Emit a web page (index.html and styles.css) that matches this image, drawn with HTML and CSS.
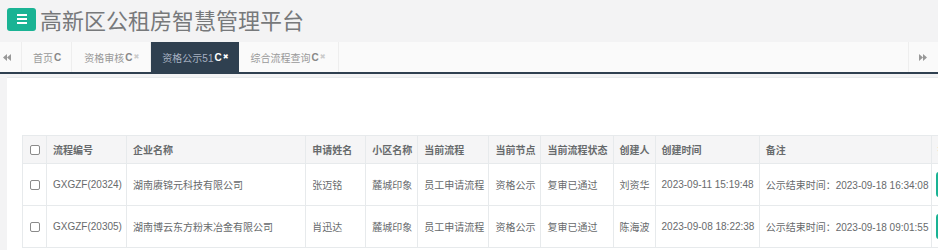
FILE: index.html
```html
<!DOCTYPE html>
<html lang="zh-CN">
<head>
<meta charset="utf-8">
<title>高新区公租房智慧管理平台</title>
<link rel="stylesheet" href="styles.css">
</head>
<body>
<header class="top">
  <button class="menu-btn" type="button" aria-label="menu">
    <span class="bar"></span><span class="bar"></span><span class="bar"></span>
  </button>
  <h1 class="title">高新区公租房智慧管理平台</h1>
</header>
<nav class="tabbar">
  <a class="tab-arrow left" href="#">
    <svg width="8" height="7" viewBox="0 0 8 7"><path d="M4 0 L0 3.5 L4 7 Z M8 0 L4 3.5 L8 7 Z" fill="#999"/></svg>
  </a>
  <div class="tabs">
    <a class="tab t1" href="#">首页<b class="re">C</b></a>
    <a class="tab t2" href="#">资格审核<b class="re">C</b><i class="x">✖</i></a>
    <a class="tab active t3" href="#">资格公示51<b class="re">C</b><i class="x">✖</i></a>
    <a class="tab t4" href="#">综合流程查询<b class="re">C</b><i class="x">✖</i></a>
  </div>
  <a class="tab-arrow right" href="#">
    <svg width="8" height="7" viewBox="0 0 8 7"><path d="M0 0 L4 3.5 L0 7 Z M4 0 L8 3.5 L4 7 Z" fill="#999"/></svg>
  </a>
</nav>
<main class="content">
  <div class="panel">
    <table class="grid">
      <colgroup>
        <col class="c-chk"><col class="c-no"><col class="c-co"><col class="c-name"><col class="c-area">
        <col class="c-flow"><col class="c-node"><col class="c-state"><col class="c-user"><col class="c-time">
        <col class="c-note"><col class="c-op">
      </colgroup>
      <thead>
        <tr>
          <th><input class="chk" type="checkbox"></th>
          <th>流程编号</th><th>企业名称</th><th>申请姓名</th><th>小区名称</th><th>当前流程</th>
          <th>当前节点</th><th>当前流程状态</th><th>创建人</th><th>创建时间</th><th>备注</th><th>操作</th>
        </tr>
      </thead>
      <tbody>
        <tr>
          <td><input class="chk" type="checkbox"></td>
          <td>GXGZF(20324)</td><td>湖南赓锦元科技有限公司</td><td>张迈铭</td><td>麓城印象</td><td>员工申请流程</td>
          <td>资格公示</td><td>复审已通过</td><td>刘资华</td><td>2023-09-11 15:19:48</td>
          <td>公示结束时间：2023-09-18 16:34:08</td><td><button class="op" type="button">查看</button></td>
        </tr>
        <tr>
          <td><input class="chk" type="checkbox"></td>
          <td>GXGZF(20305)</td><td>湖南博云东方粉末冶金有限公司</td><td>肖迅达</td><td>麓城印象</td><td>员工申请流程</td>
          <td>资格公示</td><td>复审已通过</td><td>陈海波</td><td>2023-09-08 18:22:38</td>
          <td>公示结束时间：2023-09-18 09:01:55</td><td><button class="op" type="button">查看</button></td>
        </tr>
      </tbody>
    </table>
  </div>
</main>
</body>
</html>
```
FILE: styles.css
```css
* { box-sizing: border-box; }
html, body { margin: 0; padding: 0; overflow: hidden; }
body {
  width: 938px;
  height: 250px;
  background: #f3f3f4;
  font-family: "Liberation Sans", "Noto Sans CJK SC", sans-serif;
  font-size: 10px;
  color: #676a6c;
}
a { text-decoration: none; color: inherit; }

.top {
  display: flex;
  align-items: center;
  height: 42px;
  padding: 0 0 4px 7px;
}
.menu-btn {
  width: 29px;
  height: 23px;
  border: 0;
  border-radius: 3px;
  background: #1ab394;
  display: flex;
  flex-direction: column;
  align-items: center;
  justify-content: center;
  gap: 2px;
  padding: 0;
}
.menu-btn .bar {
  display: block;
  width: 10px;
  height: 2px;
  background: #fff;
}
.title {
  margin: 0 0 0 4px;
  font-family: "Noto Sans CJK SC", sans-serif;
  font-size: 22px;
  font-weight: 400;
  line-height: 24px;
  color: #77797b;
}

.tabbar {
  display: flex;
  height: 32px;
  background: #fafafa;
  border-bottom: 2px solid #2f4050;
}
.tab-arrow {
  display: flex;
  align-items: center;
  justify-content: flex-start;
  background: #fafafa;
}
.tab-arrow.left {
  width: 22px;
  padding-left: 3px;
  border-right: 1px solid #eee;
}
.tab-arrow.right {
  width: 30px;
  margin-left: auto;
  padding-left: 10px;
  border-left: 1px solid #eee;
}
.tabs {
  display: flex;
}
.tab {
  display: flex;
  align-items: center;
  height: 30px;
  padding: 0 11px;
  border-right: 1px solid #eee;
  color: #999;
  font-size: 10px;
}
.tab.t1 { padding: 0 10px 0 11px; }
.tab.t2 { padding: 0 11px 0 12px; }
.tab.t3 { padding: 0 9px 0 11px; }
.tab.t4 { padding: 0 12px 0 12px; }
.tab .re {
  font-family: "Liberation Sans", sans-serif;
  font-weight: 700;
  font-size: 10px;
  color: #888;
  margin-left: 1px;
}
.tab .x {
  font-style: normal;
  font-family: "DejaVu Sans", sans-serif;
  font-size: 7px;
  color: #ccc;
  margin-left: 1px;
}
.tab.active {
  background: #2f4050;
  color: #a7b1c2;
  border-right-color: #2f4050;
}
.tab.active .re { color: #fff; }
.tab.active .x { color: #fff; }

.content {
  padding: 3px 0 0 7px;
}
.panel {
  background: #fff;
  height: 173px;
  padding: 57px 0 0 15px;
  overflow: hidden;
  border-top: 1px solid #e7eaec;
}
.grid {
  border-collapse: collapse;
  table-layout: fixed;
  width: 1030px;
  border: 1px solid #e7eaec;
}
.c-chk { width: 24px; }
.c-no { width: 80px; }
.c-co { width: 179px; }
.c-name { width: 60px; }
.c-area { width: 52px; }
.c-flow { width: 71px; }
.c-node { width: 52px; }
.c-state { width: 72px; }
.c-user { width: 42px; }
.c-time { width: 104px; }
.c-note { width: 172px; }
.c-op { width: 120px; }

.grid th, .grid td {
  border: 1px solid #e7eaec;
  padding: 0 6px;
  text-align: left;
  white-space: nowrap;
  overflow: hidden;
  font-size: 10px;
}
.grid th {
  background: #f5f5f6;
  font-weight: 700;
  color: #676a6c;
  height: 28px;
}
.grid td {
  height: 42px;
  color: #676a6c;
}
.grid th:first-child, .grid td:first-child {
  padding: 0 0 0 7px;
}
.chk {
  appearance: none;
  -webkit-appearance: none;
  display: block;
  width: 10px;
  height: 10px;
  margin: 0;
  border: 1px solid #8a8a8a;
  border-radius: 2px;
  background: #fff;
}
.grid td:last-child {
  padding-left: 4px;
}
.op {
  display: block;
  height: 25px;
  padding: 0 10px;
  border: 0;
  border-radius: 3px;
  background: #1ab394;
  color: #fff;
  font-size: 10px;
}
```
